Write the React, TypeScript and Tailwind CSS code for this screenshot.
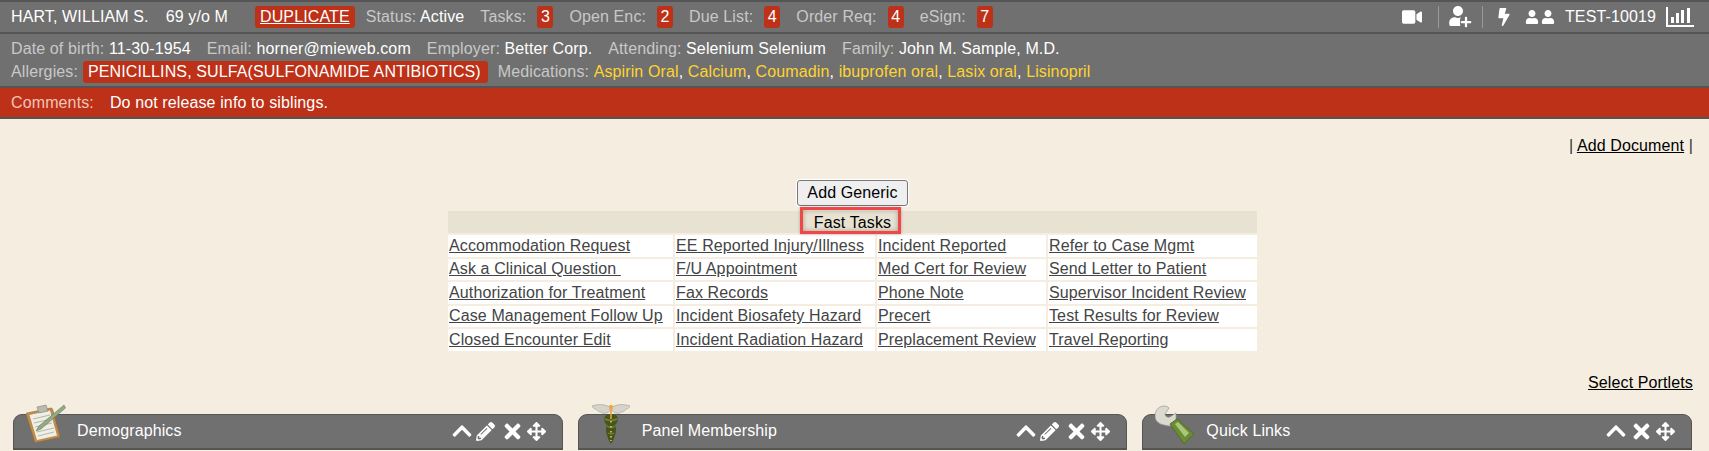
import type { ReactNode } from 'react';
import { FaVideo, FaUser, FaPlus, FaBolt, FaChevronUp, FaPencilAlt, FaTimes, FaArrowsAlt } from 'react-icons/fa';

const counters = [
  { label: 'Tasks:', value: '3' },
  { label: 'Open Enc:', value: '2' },
  { label: 'Due List:', value: '4' },
  { label: 'Order Req:', value: '4' },
  { label: 'eSign:', value: '7' },
];

const details = [
  { label: 'Date of birth:', value: '11-30-1954' },
  { label: 'Email:', value: 'horner@mieweb.com' },
  { label: 'Employer:', value: 'Better Corp.' },
  { label: 'Attending:', value: 'Selenium Selenium' },
  { label: 'Family:', value: 'John M. Sample, M.D.' },
];

const medications = ['Aspirin Oral', 'Calcium', 'Coumadin', 'ibuprofen oral', 'Lasix oral', 'Lisinopril'];

const fastTasks = [
  ['Accommodation Request', 'EE Reported Injury/Illness', 'Incident Reported', 'Refer to Case Mgmt'],
  ['Ask a Clinical Question\u00a0', 'F/U Appointment', 'Med Cert for Review', 'Send Letter to Patient'],
  ['Authorization for Treatment', 'Fax Records', 'Phone Note', 'Supervisor Incident Review'],
  ['Case Management Follow Up', 'Incident Biosafety Hazard', 'Precert', 'Test Results for Review'],
  ['Closed Encounter Edit', 'Incident Radiation Hazard', 'Preplacement Review', 'Travel Reporting'],
];

function ClipboardIcon() {
  return (
    <svg width="40" height="40" viewBox="0 0 40 40" className="blur-[0.4px]">
      <path d="M1 9L25 4q1 0 1.500 1L34 32q0 1-1 1.500L10 38.500q-1 0-1.500-1L0 10q0-1 1-1z" fill="#bd8d4e" stroke="#8d6a38" strokeWidth="0.6" />
      <path d="M3.500 11L24 6.500l7 25L11 36z" fill="#f0efe6" />
      <path d="M11 3l9-2 2 6-9 2z" fill="#b9b9ad" stroke="#85857a" strokeWidth="0.6" />
      <path d="M7 15l17-4M8 19l17-4M9 23l17-4M11 28l17-4M12 32l16-4" stroke="#b4b7a9" strokeWidth="1" />
      <path d="M38 1L13 22l-3 5 5-2L39.500 4z" fill="#93a983" stroke="#66805a" strokeWidth="0.6" />
    </svg>
  );
}

function CaduceusIcon() {
  return (
    <svg width="38" height="40" viewBox="0 0 38 40" className="blur-[0.4px]">
      <path d="M18 3C12 0 6 0 0 2c1 2 2 3 4 3 1 2 3 3 5 3 1 1 3 2 5 1 2 0 3-1 4-3z" fill="#d6d4ca" stroke="#a09e95" strokeWidth="0.6" />
      <path d="M20 3c6-3 12-3 18-1-1 2-2 3-4 3-1 2-3 3-5 3-1 1-3 2-5 1-2 0-3-1-4-3z" fill="#d6d4ca" stroke="#a09e95" strokeWidth="0.6" />
      <path d="M13 12q-2 6 2 9-2 5 0 10 1 5 4 9 3-4 4-9 2-5 0-10 4-3 2-9-2-2-6-2t-6 2z" fill="#46551a" />
      <path d="M13 15q6 3 12 0M15 22q4 3 8 0M16 29q3 2 6 0" stroke="#74852f" strokeWidth="1.500" fill="none" />
      <rect x="18.200" y="3" width="1.600" height="12" fill="#e79c3d" />
      <circle cx="19" cy="3" r="2.200" fill="#f0a64a" />
      <path d="M19 17v1.500M19 22v1.500M19 27v1.500M19 32v1.500M19 36v1" stroke="#e2c46a" strokeWidth="1.600" />
    </svg>
  );
}

function WrenchIcon() {
  return (
    <svg width="42" height="42" viewBox="0 0 42 42" className="blur-[0.4px]">
      <path d="M8 1C3 2 0 6 0 11c0 5 4 8 9 9l5 1c4 0 7-3 7-7V8l-6 4c-3 1-5-1-5-3l4-6c-2-2-4-2-6-2z" fill="#dbdad0" stroke="#97968c" strokeWidth="0.7" />
      <path d="M15 19l7-5 17 15-10 10z" fill="#6a8c35" stroke="#526e28" />
      <path d="M20 19l3-2 11 11-4 4z" fill="#a9c77c" />
    </svg>
  );
}

function BarsIcon() {
  return (
    <svg width="28" height="20" viewBox="0 0 28 20" fill="currentColor">
      <rect x="0" y="18" width="28" height="2" />
      <rect x="0" y="0" width="2" height="19" />
      <rect x="5" y="10" width="3" height="6" />
      <rect x="10" y="6" width="3" height="10" />
      <rect x="15" y="3" width="3" height="13" />
      <rect x="21" y="1" width="3" height="15" />
    </svg>
  );
}

function Portlet({ title, icon, edit, iconClass }: { title: string; icon: ReactNode; edit: boolean; iconClass: string }) {
  return (
    <div className="relative flex h-[36px] flex-1 items-center rounded-t-[9px] border border-b-2 border-[#555] bg-[#707070] pl-[63px] pr-[16px] text-white">
      <div className={`absolute ${iconClass}`}>{icon}</div>
      <span>{title}</span>
      <div className="ml-auto flex items-center gap-[3px]">
        <FaChevronUp size={22} />
        {edit && <FaPencilAlt size={19} className="mr-[3px]" />}
        <FaTimes size={23} />
        <FaArrowsAlt size={19} />
      </div>
    </div>
  );
}

export default function App() {
  return (
    <div className="min-h-[451px] overflow-hidden bg-[#f5eee0] font-['Liberation_Sans',Arial,sans-serif] text-[16px] leading-[18px] tracking-[0.12px] text-black">
      {/* Patient header */}
      <header className="border-t-2 border-[#555] bg-[#707070] text-[#c8c8c8]">
        <div className="flex h-[32px] items-center border-b-2 border-[#555] pl-[11px] pr-[15px]">
          <span className="text-white">HART, WILLIAM S.</span>
          <span className="ml-[17px] text-white">69 y/o M</span>
          <span className="ml-[27px] rounded-[3px] bg-[#bd3118] px-[5px] py-[2px] text-white underline">DUPLICATE</span>
          <span className="ml-[11px]">Status: <span className="text-white">Active</span></span>
          {counters.map((c) => (
            <span key={c.label} className="ml-[16px] flex items-center">
              {c.label}
              <span className="ml-[11px] w-[16px] rounded-[3px] bg-[#bd3118] py-[2px] text-center text-white">{c.value}</span>
            </span>
          ))}
          <div className="ml-auto flex items-center text-white">
            <FaVideo size={20} />
            <span className="ml-[16px] mr-[9px] h-[22px] w-px bg-[#999]" />
            <span className="relative block h-[24px] w-[24px]">
              <FaUser size={20} className="absolute left-0 top-[1px]" />
              <FaPlus size={12} className="absolute right-0 bottom-[1px] rounded-sm bg-[#707070]" />
            </span>
            <span className="ml-[10px] mr-[12px] h-[22px] w-px bg-[#999]" />
            <FaBolt size={18} />
            <FaUser size={14} className="ml-[12px]" />
            <FaUser size={14} className="ml-[2px]" />
            <span className="ml-[10px]">TEST-10019</span>
            <span className="ml-[10px]"><BarsIcon /></span>
          </div>
        </div>
        <div className="border-b-2 border-[#555] pl-[11px] pt-[4px] pb-[3px]">
          <div className="flex h-[22px] items-center gap-[16px]">
            {details.map((d) => (
              <span key={d.label}>{d.label} <span className="text-white">{d.value}</span></span>
            ))}
          </div>
          <div className="flex h-[23px] items-center">
            <span>Allergies:</span>
            <span className="ml-[5px] rounded-[3px] bg-[#bd3118] py-[2px] pl-[5px] pr-[7px] text-white">PENICILLINS, SULFA(SULFONAMIDE ANTIBIOTICS)</span>
            <span className="ml-[10px]">Medications:&nbsp;</span>
            {medications.map((m, i) => (
              <span key={m} className="whitespace-pre text-white">
                <span className="text-[#ffd42e]">{m}</span>
                {i < medications.length - 1 ? ', ' : ''}
              </span>
            ))}
          </div>
        </div>
      </header>
      <div className="flex h-[31px] items-center border-b-2 border-[#555] bg-[#bd3118] pl-[11px] text-white">
        <span className="text-[#f3c4b8]">Comments:</span>
        <span className="ml-[16px]">Do not release info to siblings.</span>
      </div>

      {/* Main */}
      <div className="pr-[16px] pt-[18px] text-right">
        <span className="text-[#333]">| </span>
        <a className="underline">Add Document</a>
        <span className="text-[#333]"> |</span>
      </div>
      <div className="mt-[25px] flex flex-col items-center pr-[4px]">
        <button className="h-[26px] rounded-[3px] border border-[#777] bg-[#efefef] px-[9px] shadow-[0_0_0_1px_#fff]">Add Generic</button>
        <table className="mt-[3px] w-[813px] table-fixed border-separate border-spacing-[2px] text-[#444]">
          <colgroup>
            <col className="w-[225px]" />
            <col className="w-[200px]" />
            <col className="w-[169px]" />
            <col className="w-[209px]" />
          </colgroup>
          <thead>
            <tr>
              <th colSpan={4} className="h-[22px] bg-[#e8e2d2] p-0 pt-[2px] text-center font-normal text-black">
                <span className="relative inline-block">
                  Fast Tasks
                  <span className="absolute bottom-[-2px] left-[-14px] right-[-10px] top-[-7px] border-3 border-[#f04848] shadow-[inset_0_0_5px_rgba(0,0,0,0.3),0_0_3px_rgba(0,0,0,0.25)]" />
                </span>
              </th>
            </tr>
          </thead>
          <tbody>
            {fastTasks.map((row) => (
              <tr key={row[0]}>
                {row.map((t) => (
                  <td key={t} className="h-[21.5px] whitespace-nowrap bg-white p-0 pl-[1px]">
                    <a className="underline">{t}</a>
                  </td>
                ))}
              </tr>
            ))}
          </tbody>
        </table>
      </div>
      <div className="mt-[21px] pr-[16px] text-right">
        <a className="underline">Select Portlets</a>
      </div>

      {/* Portlets */}
      <div className="mt-[22px] flex gap-[15px] pl-[13px] pr-[17px]">
        <Portlet title="Demographics" icon={<ClipboardIcon />} edit iconClass="left-[12px] top-[-11px]" />
        <Portlet title="Panel Membership" icon={<CaduceusIcon />} edit iconClass="left-[13px] top-[-11px]" />
        <Portlet title="Quick Links" icon={<WrenchIcon />} edit={false} iconClass="left-[12px] top-[-10px]" />
      </div>
    </div>
  );
}
